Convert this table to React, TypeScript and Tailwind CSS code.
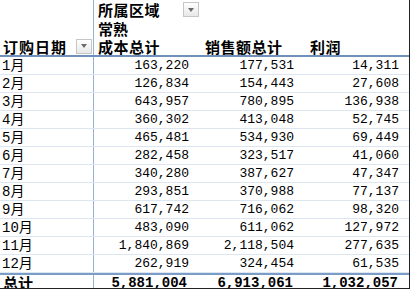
import React from 'react';

const rows: [string, string, string, string][] = [
  ['1月', '163,220', '177,531', '14,311'],
  ['2月', '126,834', '154,443', '27,608'],
  ['3月', '643,957', '780,895', '136,938'],
  ['4月', '360,302', '413,048', '52,745'],
  ['5月', '465,481', '534,930', '69,449'],
  ['6月', '282,458', '323,517', '41,060'],
  ['7月', '340,280', '387,627', '47,347'],
  ['8月', '293,851', '370,988', '77,137'],
  ['9月', '617,742', '716,062', '98,320'],
  ['10月', '483,090', '611,062', '127,972'],
  ['11月', '1,840,869', '2,118,504', '277,635'],
  ['12月', '262,919', '324,454', '61,535'],
];

const cjk = { fontFamily: '"Noto Sans CJK SC", sans-serif' };
const mono = { fontFamily: '"Liberation Mono", "Noto Sans CJK SC", monospace' };

const Dropdown: React.FC = () => (
  <div className="w-[16px] h-[15px] border border-[#c6c6c6] bg-gradient-to-b from-white to-[#e8e8e8] flex items-center justify-center shrink-0">
    <div className="w-0 h-0 border-l-[3.5px] border-r-[3.5px] border-t-[4px] border-l-transparent border-r-transparent border-t-[#6b6b6b]" />
  </div>
);

export default function App() {
  return (
    <div className="w-[410px] h-[289px] bg-white text-black overflow-hidden border-r border-b border-[#222]">
      {/* header */}
      <div className="grid grid-cols-[94px_108px_105px_102px] border-b-2 border-[#6f90b8]">
        <div className="h-[19px] border-r border-[#95b3d7]" />
        <div className="h-[19px] flex items-center pl-[4px] pr-[3px] font-bold text-[15px] leading-none" style={cjk}>
          <span className="tracking-[0.5px]">所属区域</span>
          <span className="ml-auto"><Dropdown /></span>
        </div>
        <div className="h-[19px]" />
        <div className="h-[19px]" />

        <div className="h-[18px] border-r border-[#95b3d7]" />
        <div className="h-[18px] flex items-center pl-[4px] font-bold text-[15px] leading-none" style={cjk}>常熟</div>
        <div className="h-[18px]" />
        <div className="h-[18px]" />

        <div className="h-[18px] flex items-center pl-[3px] pr-[1px] border-r border-[#95b3d7] font-bold text-[15px] leading-none" style={cjk}>
          <span className="tracking-[1px]">订购日期</span>
          <span className="ml-auto"><Dropdown /></span>
        </div>
        <div className="h-[18px] flex items-center pl-[4px] font-bold text-[15px] leading-none tracking-[0.5px]" style={cjk}>成本总计</div>
        <div className="h-[18px] flex items-center pl-[3px] font-bold text-[15px] leading-none tracking-[0.5px]" style={cjk}>销售额总计</div>
        <div className="h-[18px] flex items-center pl-[3px] font-bold text-[15px] leading-none tracking-[0.5px]" style={cjk}>利润</div>
      </div>

      {/* data rows */}
      {rows.map(([m, a, b, c]) => (
        <div key={m} className="grid grid-cols-[94px_108px_105px_102px] h-[18px] border-b border-[#dce6f1] text-[13px] leading-none" style={mono}>
          <div className="flex items-center pl-[2px] border-r border-[#95b3d7] text-[14px]">{m}</div>
          <div className="flex items-center justify-end pr-[13px]">{a}</div>
          <div className="flex items-center justify-end pr-[13px]">{b}</div>
          <div className="flex items-center justify-end pr-[10px]">{c}</div>
        </div>
      ))}

      {/* total */}
      <div className="grid grid-cols-[94px_108px_105px_102px] h-[15px] border-t-2 border-[#7a9cc6] font-bold text-[14px] leading-none" style={mono}>
        <div className="flex items-center pl-[3px] border-r border-[#95b3d7] text-[15px]" style={cjk}>总计</div>
        <div className="flex items-center justify-end pr-[15px]">5,881,004</div>
        <div className="flex items-center justify-end pr-[14px]">6,913,061</div>
        <div className="flex items-center justify-end pr-[11px]">1,032,057</div>
      </div>
    </div>
  );
}
